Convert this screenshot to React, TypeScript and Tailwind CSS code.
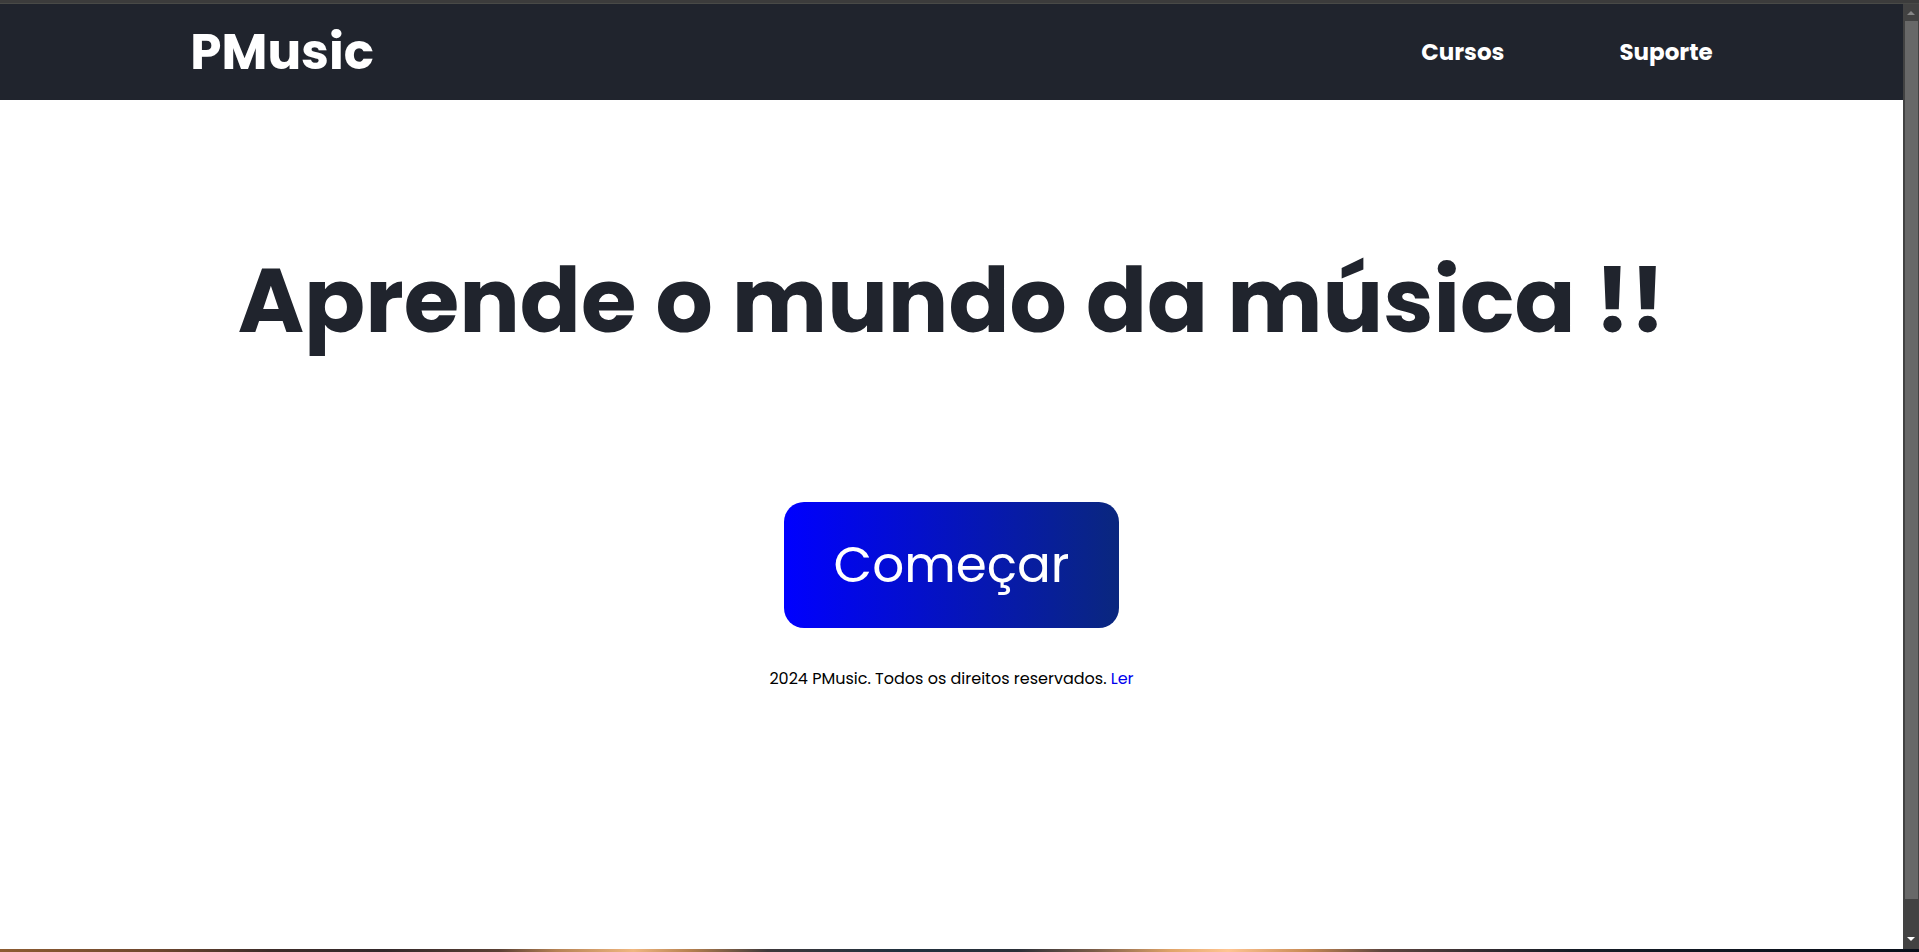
function Header() {
  return (
    <header className="flex h-24 items-center justify-between bg-[#20242d] px-[10%] text-white">
      <a href="#inicio" className="text-[50px] leading-none font-bold">
        PMusic
      </a>
      <nav className="flex items-center gap-[115px] text-[23px] leading-8 font-bold">
        <a href="#cursos">Cursos</a>
        <a href="#suporte">Suporte</a>
      </nav>
    </header>
  );
}

function Hero() {
  return (
    <main className="flex flex-1 flex-col items-center bg-white pt-36">
      <h1 className="text-center text-[90px] leading-[114px] font-bold text-[#20242d]">
        Aprende o mundo da música !!
      </h1>
      <button
        type="button"
        className="mt-36 rounded-[20px] bg-linear-to-r/srgb from-[#0000ff] to-[#0a277e] px-[50px] py-[31px] text-[50px] leading-16 text-white"
      >
        Começar
      </button>
      <p className="mt-[39px] text-base leading-6 text-black">
        2024 PMusic. Todos os direitos reservados.{" "}
        <a href="#termos" className="text-[#0000ee]">
          Ler
        </a>
      </p>
    </main>
  );
}

function ScrollRail() {
  return (
    <div aria-hidden="true" className="flex w-4 flex-col bg-[#424242]">
      <div className="flex h-[17px] items-center justify-center">
        <svg width="8" height="4" viewBox="0 0 8 4" fill="#868686">
          <path d="M4 0 8 4H0Z" />
        </svg>
      </div>
      <div className="mr-px ml-0.5 flex-1 bg-[#686868]" />
      <div className="flex h-[50px] items-end justify-center pb-2">
        <svg width="8" height="4" viewBox="0 0 8 4" fill="#ffffff">
          <path d="M0 0H8L4 4Z" />
        </svg>
      </div>
    </div>
  );
}

export default function App() {
  return (
    <div className="flex min-h-screen flex-col font-['Poppins','Inter',sans-serif]">
      <div className="h-1 border-b border-[#494a47] bg-[#3c3c3c]" />
      <div className="flex flex-1">
        <div className="flex min-w-0 flex-1 flex-col">
          <Header />
          <Hero />
        </div>
        <ScrollRail />
      </div>
      <div className="h-[3px] bg-[linear-gradient(90deg,#8d5c31_0%,#6f472e_8%,#3d2c29_14%,#33282a_20%,#5a4034_26%,#b58254_29%,#f0b780_33%,#b5804f_36%,#3d383b_40%,#20303e_47%,#2a2f38_53%,#7a5c48_57%,#e0a469_61%,#ffc592_64%,#c98b55_68%,#5f463f_72%,#352d31_77%,#151c26_82%,#080e19_100%)]" />
    </div>
  );
}
